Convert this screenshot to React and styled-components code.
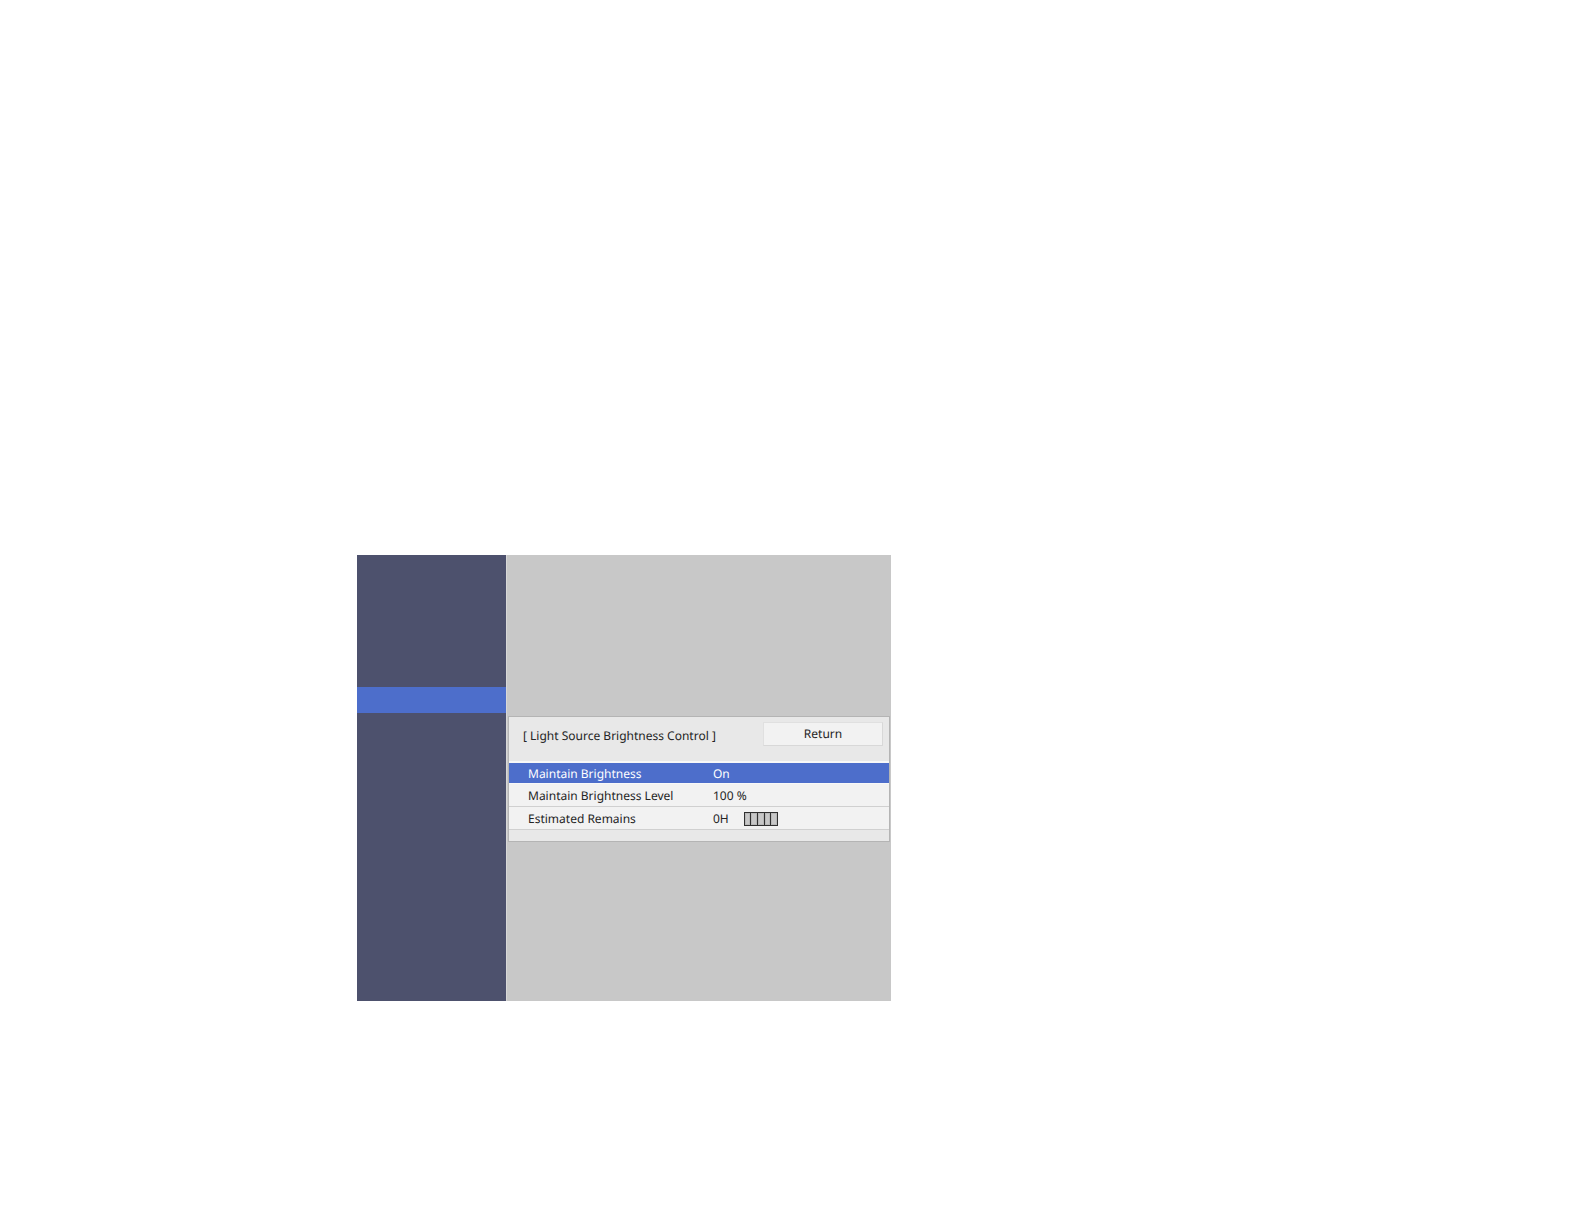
import { useState } from "react";
import styled, { createGlobalStyle } from "styled-components";

const colors = {
  text: "#242424",
  sidebar: "#4d516d",
  active: "#4d6ecb",
  screen: "#c8c8c8",
  panel: "#e8e8e8",
  row: "#f2f2f2",
  line: "#d0d0d0",
  border: "#b4b4b4"
};

const GlobalStyle = createGlobalStyle`
  * {
    box-sizing: border-box;
  }

  body {
    margin: 0;
    background: #ffffff;
    color: ${colors.text};
    font-family: "Noto Sans", sans-serif;
    font-size: 12px;
    text-rendering: geometricPrecision;
  }
`;

// styled components
const Page = styled.main`
  display: grid;
  grid-template-columns: 357fr 534fr 693fr;
  padding: 555px 0 223px;
`;

const Screen = styled.div`
  display: grid;
  grid-column: 2;
  grid-template-columns: 149fr 385fr;
  min-height: 446px;
  background: ${colors.screen};
`;

const Sidebar = styled.nav`
  padding-top: 132px;
  background: ${colors.sidebar};
`;

const SidebarItem = styled.button`
  display: block;
  width: 100%;
  height: 26px;
  padding: 0;
  border: 0;
  background: ${(props) => (props.$active ? colors.active : "transparent")};
`;

const Content = styled.section`
  padding: 161px 1px 0;
  border-left: 1px solid #d8d8d8;
`;

const Panel = styled.div`
  padding-bottom: 11px;
  border: 1px solid ${colors.border};
  background: ${colors.panel};
`;

const PanelHeader = styled.header`
  display: flex;
  justify-content: space-between;
  align-items: flex-start;
  height: 44px;
  padding: 5px 6px 0 14px;
`;

const Title = styled.h1`
  margin: 0;
  padding-top: 2px;
  font-size: 12px;
  font-weight: 400;
  line-height: 24px;
`;

const ReturnButton = styled.button`
  width: 120px;
  height: 24px;
  padding: 0 0 2px;
  border: 1px solid #e0e0e0;
  border-right-color: #d8d8d8;
  border-bottom-color: #d8d8d8;
  background: ${colors.row};
  color: inherit;
  font: inherit;
  text-rendering: inherit;
`;

const Settings = styled.table`
  width: 100%;
  border-collapse: separate;
  border-spacing: 0;
`;

const Row = styled.tr`
  color: ${(props) => (props.$selected ? "#ffffff" : "inherit")};

  th,
  td {
    height: 23px;
    padding: 2px 0 0;
    border-top: ${(props) => (props.$selected ? "2px solid #f8f8f8" : "0")};
    border-bottom: 1px solid ${(props) => (props.$selected ? "#f8f8f8" : colors.line)};
    background: ${(props) => (props.$selected ? colors.active : colors.row)};
    font-weight: 400;
    line-height: 18px;
    text-align: left;
  }

  th {
    width: 204px;
    padding-left: 19px;
  }
`;

const Value = styled.div`
  display: flex;
  align-items: center;
  gap: 15px;
`;

const Gauge = styled.div`
  display: flex;
  width: 34px;
  height: 14px;
  border: 1px solid #303030;
  background: #303030;
  gap: 1px;
`;

const Segment = styled.span`
  flex: 1;
  border: 1px solid #b8b8b8;
  background: ${colors.screen};
`;

const settings = [
  { name: "Maintain Brightness", value: "On" },
  { name: "Maintain Brightness Level", value: "100 %" },
  { name: "Estimated Remains", value: "0H", segments: 5 }
];

// main component
const App = () => {
  const [selected, setSelected] = useState(0);

  return (
    <>
      <GlobalStyle />
      <Page>
        <Screen>
          <Sidebar aria-label="Menu">
            <SidebarItem type="button" $active aria-label="Current menu" />
          </Sidebar>
          <Content>
            <Panel>
              <PanelHeader>
                <Title>[ Light Source Brightness Control ]</Title>
                <ReturnButton type="button">Return</ReturnButton>
              </PanelHeader>
              <Settings>
                <tbody>
                  {settings.map((item, index) => (
                    <Row
                      key={item.name}
                      $selected={index === selected}
                      onClick={() => setSelected(index)}
                    >
                      <th scope="row">{item.name}</th>
                      <td>
                        <Value>
                          {item.value}
                          {item.segments && (
                            <Gauge>
                              {Array.from({ length: item.segments }, (_, i) => (
                                <Segment key={i} />
                              ))}
                            </Gauge>
                          )}
                        </Value>
                      </td>
                    </Row>
                  ))}
                </tbody>
              </Settings>
            </Panel>
          </Content>
        </Screen>
      </Page>
    </>
  );
};

export default App;
